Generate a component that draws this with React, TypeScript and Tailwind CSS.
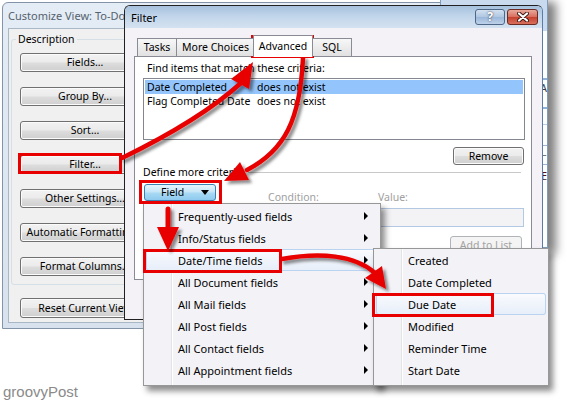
import React from "react";

const btn =
  "flex items-center justify-center rounded-[3px] border border-[#707070] bg-[linear-gradient(#f2f2f2,#ebebeb_48%,#dddddd_52%,#cfcfcf)] shadow-[inset_0_0_0_1px_#fbfbfb]";

function MenuArrow() {
  return <span className="w-0 h-0 border-y-[4px] border-y-transparent border-l-[4px] border-l-black" />;
}

type Item = { label: string; hl?: boolean; arrow?: boolean };

function Menu({ items, className }: { items: Item[]; className: string }) {
  return (
    <div
      className={`absolute flex flex-col border border-[#979797] bg-[#f3f2f7] bg-[linear-gradient(to_right,transparent_27px,#e2e3e3_27px,#e2e3e3_28px,#ffffff_28px,#ffffff_29px,transparent_29px)] px-[2px] text-[11px] shadow-[4px_5px_6px_rgba(0,0,0,0.45)] ${className}`}
    >
      {items.map((it) => (
        <div
          key={it.label}
          className={`h-[22px] shrink-0 flex items-center justify-between pl-[32px] pr-[10px] ${
            it.hl ? "rounded-[3px] bg-[linear-gradient(#fafbfe,#e6eef9)] shadow-[inset_0_0_0_1px_#bad3f0]" : ""
          }`}
        >
          <span>{it.label}</span>
          {it.arrow && <MenuArrow />}
        </div>
      ))}
    </div>
  );
}

function CustomizeWindow() {
  const labels = [
    "Fields...",
    "Group By...",
    "Sort...",
    "Filter...",
    "Other Settings...",
    "Automatic Formatting...",
    "Format Columns...",
  ];
  return (
    <div className="absolute left-[2px] top-[2px] w-[475px] h-[327px] flex flex-col rounded-t-[6px] border border-[#8394a8] bg-[linear-gradient(#e4ecf5,#d7e2ee)] px-[5px] pb-[5px]">
      <div className="h-[25px] flex items-center text-[11px] text-[#55626f]">
        <span className="w-[116px] overflow-hidden whitespace-nowrap">Customize View: To-Do List</span>
      </div>
      <div className="flex-1 flex flex-col border border-[#aab8c6] bg-[#f0f0f0]">
        <div className="w-[115px] flex-1 overflow-hidden pl-[2px] flex flex-col">
          <div className="relative mt-[10px] w-[200px] h-[246px] shrink-0 rounded-[3px] border border-[#d5dfe5] pt-[13px] pl-[8px] flex flex-col gap-[15px]">
            <span className="absolute -top-[8px] left-[4px] bg-[#f0f0f0] px-[2px] leading-[14px]">Description</span>
            {labels.map((l) => (
              <div key={l} className={`${btn} w-[130px] h-[19px] shrink-0 whitespace-nowrap`}>
                {l}
              </div>
            ))}
          </div>
          <div className={`${btn} mt-[13px] ml-[9px] w-[130px] h-[20px] shrink-0 whitespace-nowrap`}>Reset Current View</div>
        </div>
      </div>
    </div>
  );
}

function BehindWindow() {
  return (
    <div className="absolute left-[440px] top-[-4px] w-[108px] h-[252px] flex flex-col border border-[#7f9db9] bg-white shadow-[8px_6px_9px_rgba(0,0,0,0.5)]">
      <div className="h-[34px] bg-[#c9daee]" />
      <div className="h-[47px]" />
      <div className="h-[29px] border-t-2 border-[#8fb0d8] flex justify-end pt-[3px] text-[#3a3a3a]">A</div>
      <div className="h-[17px] border-t-2 border-[#8fb0d8]" />
      <div className="h-[21px] border-t border-[#b9cde6]" />
      <div className="h-[20px] border-y border-[#9db5d3] flex justify-end items-center text-[#555]">−</div>
      <div className="h-[22px] flex justify-end items-center text-[#5a1010]">E</div>
      <div className="flex-1" />
    </div>
  );
}

function FilterWindow() {
  return (
    <div className="absolute left-[124px] top-[5px] w-[419px] h-[315px] flex flex-col rounded-t-[6px] border border-[#202020] border-r-[#5a7ca6] bg-[#f4f2f7]">
      <div className="h-[22px] flex items-center justify-between pl-[6px] pr-[4px] rounded-t-[5px] bg-[linear-gradient(#a6c1de,#c1d5ea_45%,#d4e2f0)]">
        <span className="text-[11px]">Filter</span>
        <div className="flex gap-[2px]">
          <div className="w-[30px] h-[16px] rounded-[3px] border border-[#4e6786] bg-[linear-gradient(#d3e1f0,#b0c7e2_48%,#9bb7da_52%,#bed2e9)] flex items-center justify-center text-white font-bold text-[12px] [text-shadow:0_0_2px_#223]">
            ?
          </div>
          <div className="w-[31px] h-[16px] rounded-[3px] border border-[#6b2b22] bg-[linear-gradient(#e9a99b,#d8705f_48%,#c6412f_52%,#d8705c)] flex items-center justify-center">
            <svg width="12" height="10" viewBox="0 0 12 10">
              <path d="M2,1.5 L10,8.5 M10,1.5 L2,8.5" stroke="#3a1712" strokeWidth="4" strokeLinecap="round" />
              <path d="M2,1.5 L10,8.5 M10,1.5 L2,8.5" stroke="#ffffff" strokeWidth="2.2" strokeLinecap="round" />
            </svg>
          </div>
        </div>
      </div>
      <div className="flex-1 flex flex-col px-[9px]">
        <div className="relative z-10 h-[28px] flex items-end pl-[3px]">
          <div className="w-[40px] h-[18px] border border-b-0 border-[#898c95] bg-[linear-gradient(#f7f7f7,#e1e1e1)] flex items-center justify-center">Tasks</div>
          <div className="-ml-px w-[79px] h-[18px] border border-b-0 border-[#898c95] bg-[linear-gradient(#f7f7f7,#e1e1e1)] flex items-center justify-center whitespace-nowrap">More Choices</div>
          <div className="-ml-[2px] w-[60px] h-[22px] -mb-px border border-b-0 border-[#898c95] bg-white flex items-center justify-center">Advanced</div>
          <div className="-ml-px w-[40px] h-[18px] border border-b-0 border-[#898c95] bg-[linear-gradient(#f7f7f7,#e1e1e1)] flex items-center justify-center">SQL</div>
        </div>
        <div className="w-[398px] h-[224px] border border-[#898c95] bg-white pt-[4px] pl-[8px] pr-[6px] flex flex-col">
          <div className="pl-[4px] leading-[14px]">Find items that match these criteria:</div>
          <div className="mt-[3px] h-[62px] border border-[#828790] p-px flex flex-col">
            <div className="h-[14px] bg-[#93c4fb] flex items-center">
              <span className="w-[112px] pl-[2px]">Date Completed</span>
              <span>does not exist</span>
            </div>
            <div className="h-[14px] flex items-center">
              <span className="w-[112px] pl-[2px] whitespace-nowrap">Flag Completed Date</span>
              <span>does not exist</span>
            </div>
          </div>
          <div className={`${btn} mt-[7px] self-end mr-[1px] w-[71px] h-[18px]`}>Remove</div>
          <div className="h-[14px] flex items-center">
            <span>Define more criteria:</span>
            <div className="flex-1 h-px bg-[#c8c8c8] ml-[3px] mr-[4px]" />
          </div>
          <div className="mt-[5px] h-[20px] flex">
            <div className="ml-[1px] w-[72px] h-[17px] rounded-[3px] border border-[#3c7fb1] bg-[linear-gradient(#e6f5fd,#c4e5f8_48%,#a9d9f4_52%,#8ecaef)] flex items-center pl-[16px] pr-[6px] justify-between">
              <span>Field</span>
              <span className="w-0 h-0 border-x-[4px] border-x-transparent border-t-[5px] border-t-black" />
            </div>
            <span className="self-end leading-[14px] ml-[52px] w-[110px] text-[#a0a0a0]">Condition:</span>
            <span className="self-end leading-[14px] text-[#a0a0a0]">Value:</span>
          </div>
          <div className="mt-[4px] ml-[237px] w-[144px] h-[19px] border border-[#b3c8e2] bg-[#f3f3f6]" />
          <div className="mt-[9px] ml-[307px] w-[72px] h-[19px] rounded-[3px] border border-[#b0b4b8] bg-[#f4f4f4] flex items-center justify-center text-[#a3a3a3]">
            Add to List
          </div>
        </div>
      </div>
    </div>
  );
}

function Arrows() {
  return (
    <svg className="absolute left-0 top-0 pointer-events-none" width="567" height="403" viewBox="0 0 567 403">
      <defs>
        <filter id="ds" x="-30%" y="-30%" width="160%" height="160%">
          <feDropShadow dx="3" dy="3" stdDeviation="1.8" floodColor="#000" floodOpacity="0.45" />
        </filter>
      </defs>
      <g filter="url(#ds)" fill="#e80000" stroke="#e80000" strokeLinecap="round">
        <path d="M122,158 Q200,120 241,83" fill="none" strokeWidth="4.5" />
        <polygon points="253,62 249,89 231,79" stroke="none" />
        <path d="M303,58 C300,120 285,150 247,170" fill="none" strokeWidth="4.5" />
        <polygon points="224,181 249,180 240,162" stroke="none" />
        <path d="M168,209 L168,229" fill="none" strokeWidth="5" />
        <polygon points="157,227 179,227 168,251" stroke="none" />
        <path d="M282,259 C320,252 355,255 375,273" fill="none" strokeWidth="4.5" />
        <polygon points="386,289 382,266 365,278" stroke="none" />
      </g>
    </svg>
  );
}

export default function App() {
  const m1: Item[] = [
    { label: "Frequently-used fields", arrow: true },
    { label: "Info/Status fields", arrow: true },
    { label: "Date/Time fields", arrow: true, hl: true },
    { label: "All Document fields", arrow: true },
    { label: "All Mail fields", arrow: true },
    { label: "All Post fields", arrow: true },
    { label: "All Contact fields", arrow: true },
    { label: "All Appointment fields", arrow: true },
  ];
  const m2: Item[] = [
    { label: "Created" },
    { label: "Date Completed" },
    { label: "Due Date", hl: true },
    { label: "Modified" },
    { label: "Reminder Time" },
    { label: "Start Date" },
  ];
  return (
    <div className="relative w-[567px] h-[403px] overflow-hidden bg-white font-['Noto_Sans',sans-serif] text-[10.5px] leading-none text-black">
      <CustomizeWindow />
      <BehindWindow />
      <FilterWindow />
      <Menu items={m1} className="left-[143px] top-[203px] w-[238px] h-[183px] pt-[1px]" />
      <Menu items={m2} className="left-[373px] top-[248px] w-[176px] h-[138px]" />
      <div className="absolute left-[18px] top-[153px] w-[104px] h-[21px] border-[3px] border-[#e80000]" />
      <div className="absolute left-[251px] top-[35px] w-[63px] h-[23px] border-[3px] border-[#e80000]" />
      <div className="absolute left-[139px] top-[180px] w-[83px] h-[24px] border-[3px] border-[#e80000]" />
      <div className="absolute left-[143px] top-[249px] w-[139px] h-[24px] border-[3px] border-[#e80000]" />
      <div className="absolute left-[372px] top-[293px] w-[122px] h-[24px] border-[3px] border-[#e80000]" />
      <Arrows />
      <div className="absolute left-[3px] top-[384px] font-['Liberation_Sans',sans-serif] text-[15px] leading-[16px] text-[#8a8a8a]">
        groovyPost
      </div>
    </div>
  );
}
